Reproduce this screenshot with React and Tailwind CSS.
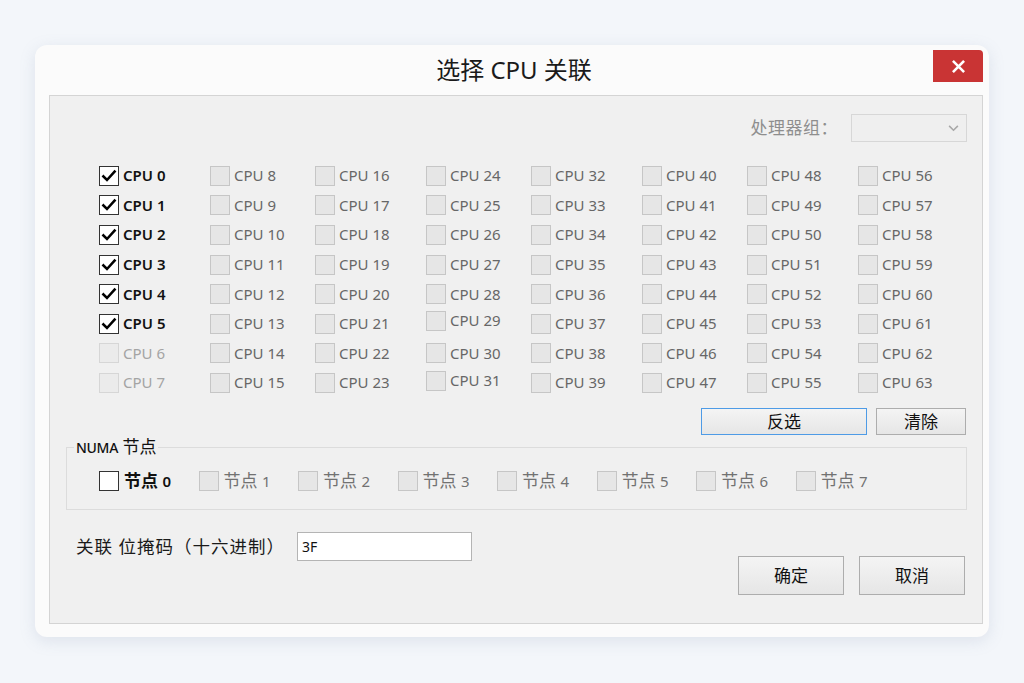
import React from "react";

const font = { fontFamily: '"Noto Sans", "Noto Sans CJK SC", sans-serif' };

// tiny position quirks in the original grid
const nudge = { 29: "mb-[6px]", 31: "mb-[4px]" };

const Check = () => (
  <svg viewBox="0 0 20 20" className="w-[16px] h-[16px]">
    <path d="M3 10.5 L7.5 15 L17 4.5" fill="none" stroke="#000" strokeWidth="3.2" strokeLinecap="square" />
  </svg>
);

const Box = ({ state }) => {
  if (state === "checked")
    return (
      <span className="w-[20px] h-[20px] bg-white border border-[#333] flex items-center justify-center shrink-0">
        <Check />
      </span>
    );
  if (state === "on")
    return <span className="w-[20px] h-[20px] bg-white border border-[#333] shrink-0" />;
  if (state === "light")
    return <span className="w-[20px] h-[20px] bg-[#ebebeb] border border-[#d6d6d6] shrink-0" />;
  return <span className="w-[20px] h-[20px] bg-[#e6e6e6] border border-[#c6c6c6] shrink-0" />;
};

const CpuCell = ({ n }) => {
  const state = n <= 5 ? "checked" : n <= 7 ? "light" : "off";
  const text =
    state === "checked" ? "text-[#111] font-semibold" : state === "light" ? "text-[#a4a4a4]" : "text-[#676767]";
  return (
    <div className={`flex items-center gap-[4px] ${nudge[n] || ""}`}>
      <Box state={state} />
      <span className={`text-[15px] leading-none ${text}`}>CPU {n}</span>
    </div>
  );
};

export default function App() {
  const cells = [];
  for (let r = 0; r < 8; r++) for (let c = 0; c < 8; c++) cells.push(c * 8 + r);

  return (
    <div className="w-[1024px] h-[683px] bg-[#f3f6fa] pt-[45px] pl-[35px]" style={font}>
      <div className="w-[954px] h-[592px] bg-[#fbfbfb] rounded-[12px] shadow-[0_4px_16px_rgba(120,140,170,0.18)] flex flex-col pl-[14px] pr-[6px] pb-[13px]">
        {/* Title bar */}
        <div className="h-[50px] flex items-start shrink-0">
          <div className="flex-1 h-[50px] flex items-center justify-center pl-[46px]">
            <span className="text-[24px] text-[#1a1a1a] leading-none">选择 CPU 关联</span>
          </div>
          <div className="mt-[5px] w-[50px] h-[32px] bg-[#c93434] rounded-tr-[4px] flex items-center justify-center">
            <svg viewBox="0 0 14 14" className="w-[13px] h-[13px]">
              <path d="M2 2 L12 12 M12 2 L2 12" stroke="#fff" strokeWidth="2.8" strokeLinecap="square" />
            </svg>
          </div>
        </div>

        {/* Body */}
        <div className="flex-1 bg-[#f0f0f0] border border-[#d4d4d4] flex flex-col">
          <div className="flex justify-end items-center mt-[18px] mr-[15px] gap-[13px]">
            <span className="text-[17px] text-[#8e8e8e] tracking-[0.5px]">处理器组：</span>
            <div className="w-[116px] h-[28px] border border-[#d7d7d7] bg-[#efefef] flex items-center justify-end pr-[7px]">
              <svg viewBox="0 0 12 8" className="w-[11px] h-[7px]">
                <path d="M1 1 L6 6 L11 1" fill="none" stroke="#a8a8a8" strokeWidth="1.8" />
              </svg>
            </div>
          </div>

          <div className="ml-[49px] mt-[19px] grid grid-cols-[111px_105px_111px_105px_111px_105px_111px_105px] auto-rows-[29.6px]">
            {cells.map((n) => (
              <CpuCell key={n} n={n} />
            ))}
          </div>

          <div className="flex justify-end gap-[9px] mt-[10px] mr-[16px]">
            <button className="w-[166px] h-[27px] border border-[#4e9be6] bg-gradient-to-b from-[#f4f4f4] to-[#e6e6e6] text-[17px] text-[#111] leading-none">
              反选
            </button>
            <button className="w-[90px] h-[27px] border border-[#adadad] bg-gradient-to-b from-[#f4f4f4] to-[#e6e6e6] text-[17px] text-[#111] leading-none">
              清除
            </button>
          </div>

          <fieldset className="ml-[16px] mr-[15px] mt-[2px] border border-[#dcdcdc] pt-[13px] pb-[18px] flex">
            <legend className="ml-[7px] px-[2px] leading-[20px] text-[#111]">
              <span className="text-[14px] font-medium tracking-[-0.3px]">NUMA</span>
              <span className="text-[17px]"> 节点</span>
            </legend>
            <div className="flex ml-[32px]">
              {[0, 1, 2, 3, 4, 5, 6, 7].map((i) => (
                <div key={i} className="w-[99.5px] flex items-center gap-[5px]">
                  <Box state={i === 0 ? "on" : "off"} />
                  <span className={`text-[17px] leading-none ${i === 0 ? "text-[#111] font-semibold" : "text-[#727272]"}`}>
                    节点 <span className="text-[15px]">{i}</span>
                  </span>
                </div>
              ))}
            </div>
          </fieldset>

          <div className="flex justify-between items-start mt-[22px] ml-[26px] mr-[17px]">
            <div className="flex items-center">
              <span className="text-[17.5px] tracking-[1px] text-[#1a1a1a] w-[221px]">关联 位掩码（十六进制）</span>
              <div className="w-[175px] h-[29px] bg-white border border-[#b4b4b4] flex items-center pl-[4px]">
                <span className="text-[14px] text-[#111]">3F</span>
              </div>
            </div>
            <div className="flex gap-[15px] mt-[24px]">
              <button className="w-[106px] h-[39px] border border-[#adadad] bg-gradient-to-b from-[#f4f4f4] to-[#e6e6e6] text-[17px] text-[#111]">
                确定
              </button>
              <button className="w-[106px] h-[39px] border border-[#adadad] bg-gradient-to-b from-[#f4f4f4] to-[#e6e6e6] text-[17px] text-[#111]">
                取消
              </button>
            </div>
          </div>
        </div>
      </div>
    </div>
  );
}
